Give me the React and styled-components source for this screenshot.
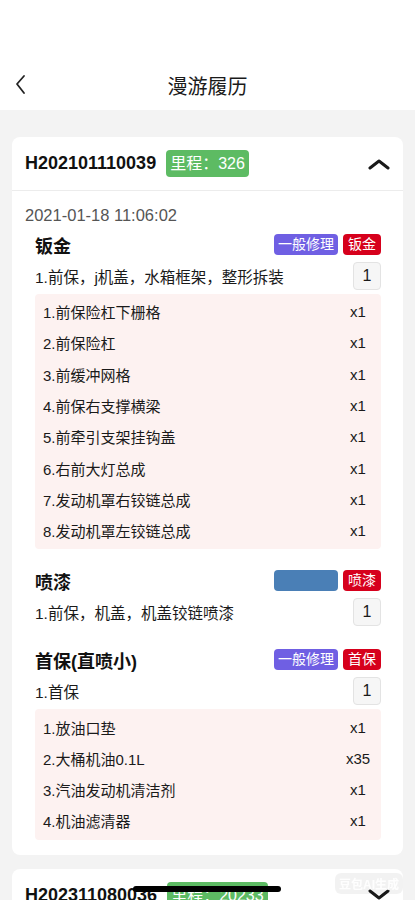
import styled, { createGlobalStyle } from "styled-components";

const GlobalStyle = createGlobalStyle`
  body {
    margin: 0;
    background: #f3f3f3;
    font-family: "Liberation Sans", "Noto Sans CJK SC", sans-serif;
    color: #1a1a1a;
  }
`;

const NavBar = styled.div`
  background: #fff;
  padding-top: 60px;
`;

const NavRow = styled.div`
  height: 50px;
  display: flex;
  align-items: center;
  justify-content: center;
  position: relative;
`;

const BackBtn = styled.div`
  position: absolute;
  left: 14px;
  top: 14px;
  width: 14px;
  height: 22px;
  display: flex;
`;

const Title = styled.div`
  font-size: 20px;
  font-weight: 400;
  color: #1a1a1a;
`;

const Content = styled.div`
  padding: 27px 12px 40px;
  display: flex;
  flex-direction: column;
  gap: 14px;
`;

const Card = styled.div`
  background: #fff;
  border-radius: 8px;
  overflow: hidden;
`;

const CardHeader = styled.div`
  height: 53px;
  padding: 0 13px;
  display: flex;
  align-items: center;
  gap: 10px;
  border-bottom: ${(p) => (p.$open ? "1px solid #ececec" : "none")};
`;

const OrderNo = styled.div`
  font-size: 18px;
  font-weight: 700;
  color: #111;
`;

const Mileage = styled.div`
  background: #5dbb63;
  color: #fff;
  font-size: 16px;
  height: 27px;
  line-height: 27px;
  padding: 0 4px;
  border-radius: 4px;
`;

const Chevron = styled.div`
  margin-left: auto;
  display: flex;
`;

const CardBody = styled.div`
  padding: 14px 22px 15px 13px;
`;

const DateLine = styled.div`
  font-size: 16.5px;
  line-height: 20px;
  color: #555;
`;

const Section = styled.div`
  margin-left: 10px;
  margin-top: ${(p) => (p.$first ? "4px" : "16px")};
`;

const SectionHead = styled.div`
  height: 31px;
  display: flex;
  align-items: center;
`;

const SectionName = styled.div`
  font-size: 18px;
  font-weight: 700;
  color: #111;
`;

const Tags = styled.div`
  margin-left: auto;
  display: flex;
  gap: 5px;
`;

const Tag = styled.div`
  height: 21px;
  line-height: 21px;
  font-size: 14px;
  color: #fff;
  border-radius: 4px;
  padding: 0 ${(p) => (p.$wide ? "4px" : "5px")};
  min-width: ${(p) => (p.$blank ? "64px" : "0")};
  box-sizing: border-box;
  background: ${(p) => p.$color};
`;

const ItemRow = styled.div`
  height: 32px;
  display: flex;
  align-items: center;
  justify-content: space-between;
  font-size: 15.5px;
  color: #1a1a1a;
`;

const Qty = styled.div`
  width: 28px;
  height: 28px;
  box-sizing: border-box;
  border: 1px solid #e3e3e3;
  background: #f6f6f6;
  border-radius: 4px;
  display: flex;
  align-items: center;
  justify-content: center;
  font-size: 16px;
`;

const PartsBox = styled.div`
  margin-top: 2px;
  padding: 2px 8px 3px;
  background: #fdf2f1;
  border-radius: 4px;
`;

const PartRow = styled.div`
  height: 31.3px;
  display: flex;
  align-items: center;
  font-size: 15px;
  color: #1a1a1a;
`;

const PartName = styled.div`
  flex: 1;
`;

const PartQty = styled.div`
  width: 30px;
  text-align: center;
`;

const HomeBar = styled.div`
  position: fixed;
  left: 133px;
  bottom: 8px;
  width: 148px;
  height: 6px;
  border-radius: 3px;
  background: #000;
`;

const Watermark = styled.div`
  position: fixed;
  right: 12px;
  bottom: 6px;
  padding: 2px 4px;
  border-radius: 6px;
  background: rgba(0, 0, 0, 0.05);
  font-size: 12px;
  font-weight: 700;
  color: rgba(255, 255, 255, 0.9);
`;

const PURPLE = "#6f5fe3";
const RED = "#d6001c";
const BLUE = "#4a7fb6";

const sections = [
  {
    name: "钣金",
    tags: [
      { text: "一般修理", color: PURPLE, wide: true },
      { text: "钣金", color: RED },
    ],
    item: "1.前保，j机盖，水箱框架，整形拆装",
    parts: [
      ["1.前保险杠下栅格", "x1"],
      ["2.前保险杠", "x1"],
      ["3.前缓冲网格", "x1"],
      ["4.前保右支撑横梁", "x1"],
      ["5.前牵引支架挂钩盖", "x1"],
      ["6.右前大灯总成", "x1"],
      ["7.发动机罩右铰链总成", "x1"],
      ["8.发动机罩左铰链总成", "x1"],
    ],
  },
  {
    name: "喷漆",
    tags: [
      { text: "", color: BLUE, blank: true },
      { text: "喷漆", color: RED },
    ],
    item: "1.前保，机盖，机盖铰链喷漆",
    parts: [],
  },
  {
    name: "首保(直喷小)",
    tags: [
      { text: "一般修理", color: PURPLE, wide: true },
      { text: "首保", color: RED },
    ],
    item: "1.首保",
    parts: [
      ["1.放油口垫", "x1"],
      ["2.大桶机油0.1L", "x35"],
      ["3.汽油发动机清洁剂", "x1"],
      ["4.机油滤清器", "x1"],
    ],
  },
];

function ChevronIcon({ up }) {
  return (
    <svg width="22" height="12" viewBox="0 0 22 12">
      <polyline
        points={up ? "2,10 11,3 20,10" : "2,2 11,9 20,2"}
        fill="none"
        stroke="#1a1a1a"
        strokeWidth="3"
        strokeLinecap="round"
        strokeLinejoin="round"
      />
    </svg>
  );
}

export default function App() {
  return (
    <>
      <GlobalStyle />
      <NavBar>
        <NavRow>
          <BackBtn>
            <svg width="14" height="22" viewBox="0 0 14 22">
              <polyline
                points="10,2 3,10 10,19"
                fill="none"
                stroke="#222"
                strokeWidth="1.8"
                strokeLinecap="round"
                strokeLinejoin="round"
              />
            </svg>
          </BackBtn>
          <Title>漫游履历</Title>
        </NavRow>
      </NavBar>
      <Content>
        <Card>
          <CardHeader $open>
            <OrderNo>H202101110039</OrderNo>
            <Mileage>里程：326</Mileage>
            <Chevron>
              <ChevronIcon up />
            </Chevron>
          </CardHeader>
          <CardBody>
            <DateLine>2021-01-18 11:06:02</DateLine>
            {sections.map((s, i) => (
              <Section key={s.name} $first={i === 0}>
                <SectionHead>
                  <SectionName>{s.name}</SectionName>
                  <Tags>
                    {s.tags.map((t, j) => (
                      <Tag key={j} $color={t.color} $wide={t.wide} $blank={t.blank}>
                        {t.text}
                      </Tag>
                    ))}
                  </Tags>
                </SectionHead>
                <ItemRow>
                  <span>{s.item}</span>
                  <Qty>1</Qty>
                </ItemRow>
                {s.parts.length > 0 && (
                  <PartsBox>
                    {s.parts.map(([n, q]) => (
                      <PartRow key={n}>
                        <PartName>{n}</PartName>
                        <PartQty>{q}</PartQty>
                      </PartRow>
                    ))}
                  </PartsBox>
                )}
              </Section>
            ))}
          </CardBody>
        </Card>
        <Card>
          <CardHeader>
            <OrderNo>H202311080036</OrderNo>
            <Mileage>里程：20233</Mileage>
            <Chevron>
              <ChevronIcon />
            </Chevron>
          </CardHeader>
        </Card>
      </Content>
      <HomeBar />
      <Watermark>豆包AI生成</Watermark>
    </>
  );
}
